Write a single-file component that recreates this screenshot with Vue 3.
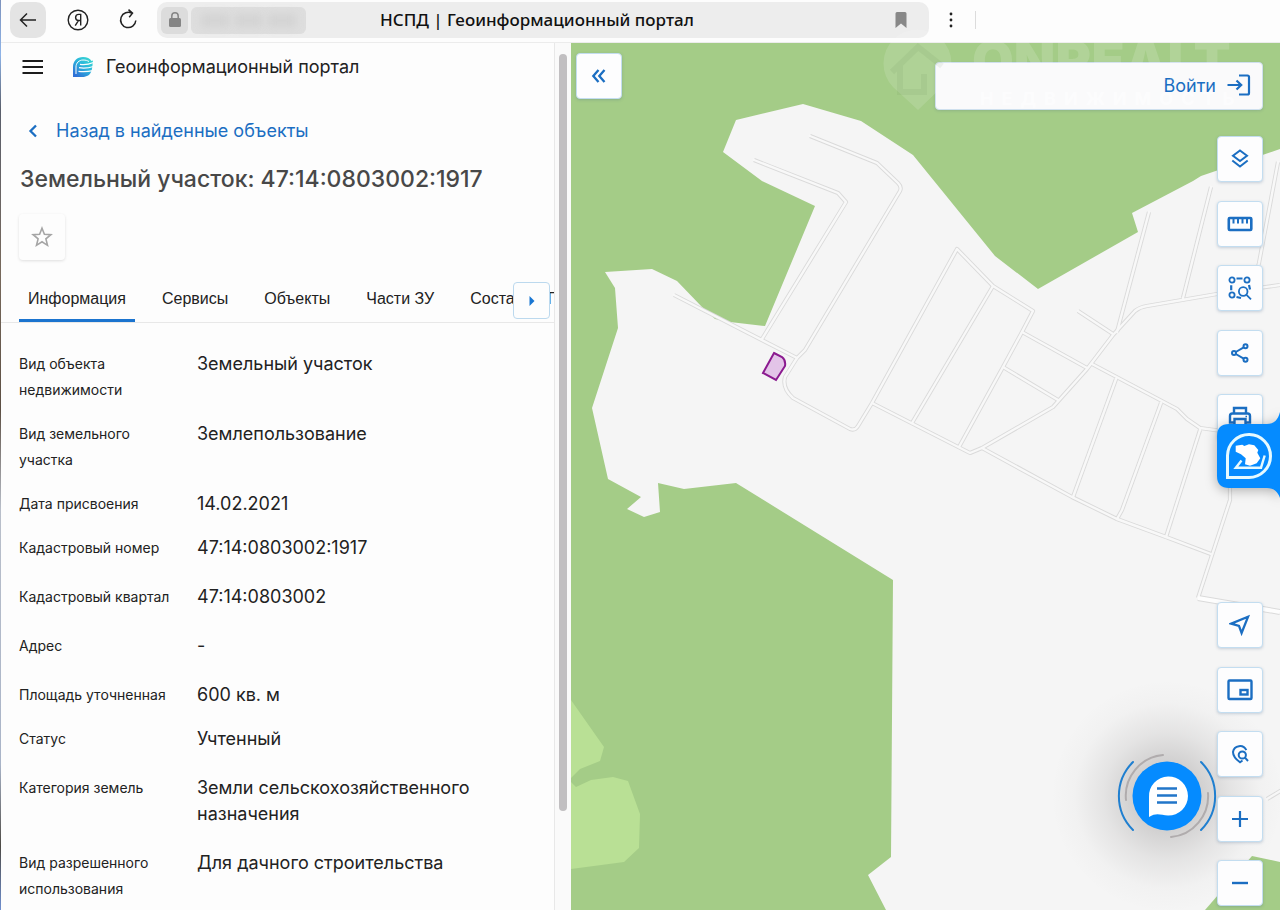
<script setup>
import { ref } from 'vue'

const tabs = ['Информация', 'Сервисы', 'Объекты', 'Части ЗУ', 'Состав ЕЗП']
const activeTab = ref('Информация')

const rows = [
  { label: 'Вид объекта недвижимости', value: 'Земельный участок' },
  { label: 'Вид земельного участка', value: 'Землепользование' },
  { label: 'Дата присвоения', value: '14.02.2021' },
  { label: 'Кадастровый номер', value: '47:14:0803002:1917', spaced: true },
  { label: 'Кадастровый квартал', value: '47:14:0803002', spaced: true },
  { label: 'Адрес', value: '-', spaced: true },
  { label: 'Площадь уточненная', value: '600 кв. м' },
  { label: 'Статус', value: 'Учтенный', spaced: true },
  { label: 'Категория земель', value: 'Земли сельскохозяйственного назначения', spaced: true },
  { label: 'Вид разрешенного использования', value: 'Для дачного строительства' },
]

const roads = [
  'M810 136L877 163L898 183Q902 187 900 191L805 350L797 358L785 377Q782 388 793 398L850 429Q855 431 858 426L872 403L957 249L993 286L1033 311L1022 332L1003 367L959 447',
  'M754 160L838 193L846 202L762 339',
  'M674 295L797 358',
  'M872 403L970 453L982 448L1053 407L1087 369L1113 335L1135 311Q1140 307 1147 306L1217 294L1280 285',
  'M993 286L912 423',
  'M1022 332L1087 368M1092 364L1177 409L1187 419L1200 428L1222 431',
  'M1003 367L1058 400',
  'M1078 311L1113 334',
  'M1149 212L1117 332',
  'M1211 187L1183 298',
  'M1278 162L1259 263L1252 290',
  'M982 448L1072 497L1117 519L1166 537L1211 554',
  'M1116 379L1073 497',
  'M1161 403L1122 510L1117 519',
  'M1200 430L1166 537',
  'M1230 480L1230 500L1198 598',
  'M1267 799L1282 790',
]
</script>

<template>
  <div class="page">
    <header class="toolbar">
      <button class="nav nav-back" aria-label="Назад">
        <svg width="20" height="20" viewBox="0 0 20 20" fill="none" stroke="#222" stroke-width="1.5"><path d="M18 10H3M9 3.5L2.5 10L9 16.5" /></svg>
      </button>
      <button class="nav" aria-label="Яндекс">
        <svg width="24" height="24" viewBox="0 0 24 24" fill="none" stroke="#222" stroke-width="1.4">
          <circle cx="12" cy="12" r="9.8" />
          <path d="M14.7 17.6V6.4h-1.9c-2 0-3.2 1.2-3.2 3.1 0 1.9 1.2 3 3.1 3h2M12.6 12.4L9.2 17.6" />
        </svg>
      </button>
      <button class="nav" aria-label="Обновить">
        <svg width="24" height="24" viewBox="0 0 24 24" fill="none" stroke="#222" stroke-width="1.5"><path d="M19.8 12.5A7.6 7.6 0 1 1 16 5.400M12.500 1.600L16.500 5.200L13.200 9.200" /></svg>
      </button>
      <div class="address">
        <button class="lock" aria-label="Защищённое соединение">
          <svg width="14" height="18" viewBox="0 0 14 18"><rect x="1" y="7" width="12" height="9" rx="1.500" fill="#858585" /><path d="M3.800 8V5a3.200 3.200 0 0 1 6.400 0v3" fill="none" stroke="#858585" stroke-width="1.500" /></svg>
        </button>
        <span class="host"><i></i><i></i><i></i></span>
        <span class="page-title">НСПД | Геоинформационный портал</span>
        <button class="bookmark" aria-label="Закладка">
          <svg width="12" height="18" viewBox="0 0 12 18"><path d="M.5 2.500Q.5 1 2 1h8q1.500 0 1.500 1.500V17L6 12.500L.5 17z" fill="#888" /></svg>
        </button>
      </div>
      <button class="dots" aria-label="Меню">
        <svg width="4" height="18" viewBox="0 0 4 18" fill="#222"><circle cx="2" cy="3" r="1.400" /><circle cx="2" cy="9" r="1.400" /><circle cx="2" cy="15" r="1.400" /></svg>
      </button>
      <span class="divider"></span>
    </header>

    <main class="content">
      <aside class="panel">
        <div class="panel-body">
          <div class="brand">
            <button class="burger" aria-label="Меню портала">
              <svg width="22" height="16" viewBox="0 0 22 16" stroke="#1c1c1c" stroke-width="2.200"><path d="M.5 2H21M.5 8H21M.5 14H21" /></svg>
            </button>
            <svg class="logo" width="22" height="22" viewBox="0 0 22 22">
              <defs><linearGradient id="brandFill" x1="1" y1="0" x2="0.200" y2="1"><stop offset="0" stop-color="#3be0cf" /><stop offset="0.500" stop-color="#2bb5dc" /><stop offset="1" stop-color="#2f6fd6" /></linearGradient></defs>
              <path d="M1 21V11C1 5 5 1 11 1c4 0 7 1.500 8.500 4L21 4.500C20 12 21 21 10 21z" fill="url(#brandFill)" />
              <path d="M4 18v-7c0-4 3-7 7-7 3 0 4 .5 6 1.500" fill="none" stroke="#fdfdfd" stroke-width="1" />
              <path d="M8 8.300c4 .8 8 .4 13.500-1.800M7 11.700c5 .8 9 .5 14.500-1.200M6.500 15.300c5 .6 9 .4 14.500-.6" fill="none" stroke="#fdfdfd" stroke-width="1.300" />
            </svg>
            <span class="brand-name">Геоинформационный портал</span>
          </div>

          <a class="back" href="#">
            <svg width="10" height="14" viewBox="0 0 10 14" fill="none" stroke="#1b6ec2" stroke-width="2.300"><path d="M8 1.500L2.500 7L8 12.500" /></svg>
            Назад в найденные объекты
          </a>

          <h1>Земельный участок: 47:14:0803002:1917</h1>

          <button class="star" aria-label="В избранное">
            <svg width="22" height="22" viewBox="0 0 22 22" fill="none" stroke="#a5a5a5" stroke-width="1.600"><path d="M11 2.200L13.400 8.300L19.900 8.700L14.900 12.900L16.500 19.300L11 15.800L5.500 19.300L7.100 12.900L2.100 8.700L8.600 8.300z" /></svg>
          </button>

          <div class="tabs-wrap">
            <nav class="tabs" role="tablist">
              <button
                v-for="tab in tabs"
                :key="tab"
                role="tab"
                :aria-selected="tab === activeTab"
                :class="['tab', { active: tab === activeTab }]"
                @click="activeTab = tab"
              >{{ tab }}</button>
            </nav>
            <button class="tabs-next" aria-label="Следующие вкладки">
              <svg width="6" height="10" viewBox="0 0 6 10"><path d="M0.500 0L5.500 5L0.500 10z" fill="#1976d2" /></svg>
            </button>
          </div>

          <dl class="facts">
            <div v-for="row in rows" :key="row.label" :class="['fact', { spaced: row.spaced }]">
              <dt>{{ row.label }}</dt>
              <dd>{{ row.value }}</dd>
            </div>
          </dl>
        </div>
        <div class="scrollbar"><div class="thumb"></div></div>
      </aside>

      <section class="map">
        <svg class="canvas" viewBox="571 43 709 867" preserveAspectRatio="xMinYMin slice">
          <rect x="571" y="43" width="709" height="867" fill="#a4cc87" />
          <path fill="#f5f5f5" d="M803 104L861 121L913 155L995 256L1038 289L1138 232L1132 213L1193 181L1201 176L1280 149V910H886L868 875L891 857L893 580L736 483L684 489L658 483L660 512L644 517L627 509L641 497L608 479L592 408L618 328L615 288L605 272L652 269L677 281L702 307L715 319L730 322L765 326L815 206L762 181L723 152L736 120z" />
          <path fill="#b9e095" d="M571 700L604 747L600 761L580 769L571 778zM571 782L576 787L591 780L613 777L628 781L640 814L639 848L624 862L571 869z" />
          <path fill="#a4cc87" d="M1205 910L1252 856L1280 862V910z" />
          <g fill="none" stroke-linejoin="round">
            <path v-for="d in roads" :key="d" :d="d" stroke="#dadada" stroke-width="4.200" />
            <path d="M1198 598L1280 612" stroke="#dadada" stroke-width="6" />
            <path v-for="d in roads" :key="d + 'i'" :d="d" stroke="#f8f8f8" stroke-width="2.400" stroke-linecap="round" />
            <path d="M1198 598L1280 612" stroke="#fdfdfd" stroke-width="4" />
          </g>
          <path d="M774 353L782 357Q786 360 785 366L776 380L763 373z" fill="#e3c4e8" stroke="#8b1a8f" stroke-width="2" />
        </svg>

        <button class="chat" aria-label="Открыть чат">
          <svg width="104" height="104" viewBox="0 0 104 104" fill="none" stroke-linecap="round">
            <g stroke="#1f7fd0" stroke-width="2"><path d="M18 18A48 48 0 0 0 18 86M86 18A48 48 0 0 1 86 86" /></g>
            <g stroke="#b0acad" stroke-width="2"><path d="M48 11A41 41 0 0 0 11 56M93 49A41 41 0 0 1 56 93" /></g>
            <circle cx="52" cy="52" r="34.500" fill="#058bff" />
            <path d="M34 73V53A19.500 19.500 0 1 1 53 71.500C46 71.500 42 68 34 73z" fill="#fff" />
            <path d="M42 44.500H62M42 51.500H62M42 58.500H62" stroke="#2276c9" stroke-width="2.600" stroke-linecap="butt" />
          </svg>
        </button>

        <button class="tile collapse" aria-label="Свернуть панель">
          <svg width="16" height="16" viewBox="0 0 16 16" fill="none" stroke="#1b6ec2" stroke-width="2.300"><path d="M7.500 2L2.300 8L7.500 14M13.500 2L8.300 8L13.500 14" /></svg>
        </button>

        <a class="login" href="#">
          Войти
          <svg width="24" height="22" viewBox="0 0 24 22" fill="none" stroke="#1b6ec2" stroke-width="2.200"><path d="M0.500 11H14M9.500 6.500L14.200 11L9.500 15.500M12 1.500h8.500q1.500 0 1.500 1.500v16q0 1.500-1.500 1.500H12" /></svg>
        </a>

        <div class="tools tools-top">
          <button class="tile" aria-label="Слои">
            <svg width="18" height="20" viewBox="0 0 18 20" fill="none" stroke="#1b6ec2" stroke-width="2"><path d="M9 1.500L16 6.800L9 12.100L2 6.800zM1.300 11.500L9 17.500L16.700 11.500" /></svg>
          </button>
          <button class="tile" aria-label="Измерения">
            <svg width="26" height="16" viewBox="0 0 26 16" fill="none" stroke="#1b6ec2" stroke-width="2.600"><rect x="1.800" y="2" width="22.500" height="12" rx="1" /><path d="M6.500 2v5.500M11 2v5.500M15.500 2v5.500M20 2v5.500" stroke-width="2" /></svg>
          </button>
          <button class="tile" aria-label="Поиск по области">
            <svg width="24" height="24" viewBox="0 0 24 24" fill="none" stroke="#1b6ec2" stroke-width="1.800">
              <circle cx="4" cy="4" r="2.600" /><circle cx="19" cy="4" r="2.600" /><circle cx="4" cy="19" r="2.600" />
              <path d="M8.500 2.500h6M3.200 9.300v5M21 9l1 4.500M8.500 21l4.500 1" stroke-width="2.200" />
              <circle cx="15.200" cy="15.500" r="4.300" /><path d="M18.500 18.800L23 23.300" />
            </svg>
          </button>
          <button class="tile" aria-label="Поделиться">
            <svg width="18" height="20" viewBox="0 0 18 20" fill="none" stroke="#1b6ec2" stroke-width="2"><circle cx="3" cy="10" r="2" /><circle cx="14.500" cy="3.300" r="2" /><circle cx="14.500" cy="16.700" r="2" /><path d="M4.800 9L12.700 4.400M4.800 11L12.700 15.600" /></svg>
          </button>
          <button class="tile" aria-label="Печать">
            <svg width="24" height="22" viewBox="0 0 24 22" fill="none" stroke="#1b6ec2" stroke-width="2.400"><path d="M6 7V2h12v5M6 16.500H2V10q0-2.500 2.500-2.500h15Q22 7.500 22 10v6.500h-4M6.500 13h11v7h-11z" /><path d="M17.500 10.500h1.500" stroke-width="1.500" /></svg>
          </button>
        </div>

        <div class="tools tools-bottom">
          <button class="tile" aria-label="Моё местоположение">
            <svg width="22" height="22" viewBox="0 0 22 22" fill="none" stroke="#1b6ec2" stroke-width="2.300"><path d="M19 2.800L2.200 9.700L10 11.900L12.600 19z" /></svg>
          </button>
          <button class="tile" aria-label="Обзорная карта">
            <svg width="26" height="22" viewBox="0 0 26 22" fill="none" stroke="#1b6ec2" stroke-width="2.400"><rect x="1.500" y="1.500" width="23" height="18.500" rx="1" /><rect x="13.500" y="11" width="7" height="4.500" /></svg>
          </button>
          <button class="tile" aria-label="Поиск по координатам">
            <svg width="18" height="20" viewBox="0 0 18 20" fill="none" stroke="#1b6ec2" stroke-width="2"><path d="M15.300 6.200A7 7 0 0 0 2 8c0 5 4.500 8.500 7 10.300L11.500 16.500" /><circle cx="11.300" cy="11" r="3.600" /><path d="M14 13.700L17 17" /></svg>
          </button>
          <button class="tile" aria-label="Приблизить">
            <svg width="18" height="18" viewBox="0 0 18 18" stroke="#1b6ec2" stroke-width="2.200"><path d="M1 9H17M9 1V17" /></svg>
          </button>
          <button class="tile" aria-label="Отдалить">
            <svg width="18" height="18" viewBox="0 0 18 18" stroke="#1b6ec2" stroke-width="2.400"><path d="M1 9H17" /></svg>
          </button>
        </div>

        <button class="services" aria-label="Сервисы портала">
          <svg width="63" height="88" viewBox="0 0 63 88">
            <path d="M63 0C61 8 57 12 50 12H12Q0 12 0 24V64Q0 76 12 76H50C57 76 61 80 63 86z" fill="#058bff" />
            <path d="M10.500 65.500V43.500A21.500 21.500 0 1 1 32 65.500z" fill="none" stroke="#e6faff" stroke-width="3" />
            <path d="M18.700 33.700L25.300 32.700L27.300 34L32 32.300L37.300 33.300L41.300 38L40.300 40.700L43.300 46.300L39.700 51.300L33 53.700L28 52.300L28.700 46.300L24 42.300L18.700 39.700z" fill="#fff" />
            <path d="M24.500 48.500L18.800 55.700H44L47.700 43.500" fill="none" stroke="#e6faff" stroke-width="2.400" />
          </svg>
        </button>
      </section>
    </main>

    <div class="watermark" aria-hidden="true">
      <svg width="74" height="84" viewBox="0 0 74 84">
        <path d="M36 82L11 59A34 34 0 1 1 60 59z" fill="#fff" fill-opacity="0.130" />
        <path d="M10 44L36 19L60 38M18 38V64H42V46" fill="none" stroke="#507040" stroke-opacity="0.080" stroke-width="6" />
      </svg>
      <div class="wm-text"><span class="wm-name">ONREALT</span><span class="wm-sub">НЕДВИЖИМОСТЬ</span></div>
    </div>
  </div>
</template>

<style>
body {
  background: #fdfdfd;
}
</style>

<style scoped>
* {
  box-sizing: border-box;
}
button {
  border: 0;
  padding: 0;
  background: none;
  font: inherit;
  color: inherit;
  cursor: pointer;
}
svg {
  display: block;
}
.page {
  position: relative;
  display: flex;
  flex-direction: column;
  height: 100vh;
  overflow: hidden;
  background: #fdfdfd;
  font-family: Inter, "Liberation Sans", sans-serif;
  color: #222;
}
.page::before {
  content: "";
  position: absolute;
  z-index: 5;
  inset: 0 auto 0 0;
  width: 1px;
  background: linear-gradient(#7d93bd, #8fb4e8 6%, #5a5f6c 12%, #77695c 30%, #5c4f43 45%, #b9bfca 56%, #a9b4c8 84%, #4d4a45 93%, #6f8fd0);
}

.toolbar {
  display: flex;
  align-items: center;
  flex: none;
  height: 43px;
  padding: 0 0 2px 10px;
  border-bottom: 1px solid #ececec;
}
.nav {
  display: grid;
  place-items: center;
  width: 36px;
  height: 36px;
  margin-right: 14px;
  border-radius: 10px;
}
.nav-back {
  background: #e4e4e4;
}
.address {
  display: flex;
  align-items: center;
  flex: 1;
  gap: 3px;
  height: 36px;
  margin-right: 20px;
  padding: 0 22px 0 4px;
  border-radius: 10px;
  background: #ededed;
}
.nav + .address {
  margin-left: -3px;
}
.lock {
  display: grid;
  place-items: center;
  width: 27px;
  height: 27px;
  border-radius: 6px;
  background: #dcdcdc;
}
.host {
  display: flex;
  align-items: center;
  gap: 6px;
  width: 115px;
  height: 27px;
  padding: 0 10px;
  border-radius: 6px;
  background: #dedede;
}
.host i {
  flex: 1;
  height: 13px;
  background: #d3d3d3;
  filter: blur(4px);
}
.page-title {
  flex: 1;
  margin: 0 20px 0 71px;
  font-family: "Noto Sans", "Open Sans", sans-serif;
  font-size: 17px;
  font-weight: 500;
  line-height: 24px;
  white-space: nowrap;
  color: #111;
}
.dots {
  width: 4px;
  margin-right: 22px;
}
.divider {
  width: 1px;
  height: 18px;
  margin-right: 304px;
  background: #dcdcdc;
}

.content {
  display: flex;
  flex: 1;
  min-height: 0;
}
.panel {
  display: flex;
  flex: none;
  width: 571px;
}
.panel-body {
  flex: 1;
  min-width: 0;
  overflow: hidden;
}
.scrollbar {
  width: 17px;
  padding: 11px 4px 99px;
  border-left: 1px solid #e8e8e8;
  background: #fafafa;
}
.thumb {
  height: 100%;
  border-radius: 4px;
  background: #c1bfc1;
}
.brand {
  display: flex;
  align-items: center;
  height: 47px;
  padding-left: 22px;
}
.logo {
  margin: 0 12px 0 28px;
}
.brand-name {
  font-size: 18px;
  line-height: 26px;
}
.back {
  display: flex;
  align-items: center;
  gap: 18px;
  margin: 28px 0 0 28px;
  font-size: 18px;
  line-height: 26px;
  color: #1b6ec2;
  text-decoration: none;
}
h1 {
  margin: 19px 0 0 20px;
  font-size: 23px;
  font-weight: 500;
  line-height: 32px;
  color: #484848;
}
.star {
  display: grid;
  place-items: center;
  width: 46px;
  height: 46px;
  margin: 19px 0 0 19px;
  border-radius: 4px;
  box-shadow: 0 1px 3px rgba(0, 0, 0, 0.12);
}
.tabs-wrap {
  position: relative;
  margin-top: 16px;
  border-bottom: 1px solid #e8e8e8;
}
.tabs {
  display: flex;
  gap: 18px;
  height: 46px;
  padding-left: 19px;
  overflow: hidden;
  font-family: "Liberation Sans", Arial, sans-serif;
}
.tab {
  flex: none;
  padding: 2px 9px 0;
  border-bottom: 3px solid transparent;
  font-size: 16px;
  line-height: 24px;
  white-space: nowrap;
}
.tab.active {
  border-bottom-color: #1b74cf;
}
.tabs-next {
  position: absolute;
  top: 6px;
  right: 4px;
  display: grid;
  place-items: center;
  width: 37px;
  height: 37px;
  border: 1px solid #bcd9ee;
  border-radius: 4px;
  background: #fdfdfd;
}
.facts {
  display: grid;
  gap: 18px;
  margin: 28px 0 0;
  padding-left: 19px;
}
.fact {
  display: grid;
  grid-template-columns: 154px 300px;
  column-gap: 24px;
  line-height: 26px;
}
.fact.spaced {
  padding-bottom: 5px;
}
dt {
  font-size: 14px;
}
dd {
  margin: 0;
  font-size: 18px;
}

.map {
  position: relative;
  flex: 1;
  min-width: 0;
  overflow: hidden;
}
.canvas {
  position: absolute;
  inset: 0;
  width: 100%;
  height: 100%;
}
.tile {
  display: grid;
  place-items: center;
  width: 46px;
  height: 46px;
  border: 1px solid #c3ddf0;
  border-radius: 4px;
  background: #fdfdfe;
  box-shadow: 0 1px 3px rgba(60, 90, 130, 0.25);
}
.collapse {
  position: absolute;
  top: 10px;
  left: 5px;
}
.login {
  position: absolute;
  top: 19px;
  right: 17px;
  display: flex;
  align-items: center;
  justify-content: flex-end;
  gap: 11px;
  width: 328px;
  height: 48px;
  padding: 0 11px 2px;
  border: 1px solid #cfe0ee;
  border-radius: 4px;
  background: #fafafb;
  box-shadow: 0 1px 3px rgba(60, 90, 130, 0.2);
  font-size: 18px;
  color: #1b6ec2;
  text-decoration: none;
}
.tools {
  position: absolute;
  right: 17px;
  display: flex;
  flex-direction: column;
  justify-content: space-between;
  height: 304px;
}
.tools-top {
  top: 93px;
}
.tools-bottom {
  bottom: 4px;
}
.services {
  position: absolute;
  top: 369px;
  right: 0;
  filter: drop-shadow(0 2px 6px rgba(0, 0, 0, 0.3));
}
.chat {
  position: absolute;
  right: 61px;
  bottom: 62px;
  border-radius: 50%;
}
.chat::before {
  content: "";
  position: absolute;
  inset: -64px;
  border-radius: 50%;
  background: radial-gradient(closest-side, rgba(60, 55, 55, 0.2) 28%, rgba(60, 55, 55, 0.09) 55%, rgba(60, 55, 55, 0.02) 80%, transparent);
}
.chat svg {
  position: relative;
}

.watermark {
  position: absolute;
  top: 28px;
  right: 0;
  display: flex;
  gap: 16px;
  width: 398px;
  pointer-events: none;
}
.wm-text {
  display: flex;
  flex-direction: column;
  color: rgba(255, 255, 255, 0.15);
}
.wm-name {
  padding-top: 8px;
  font-size: 54px;
  font-weight: 900;
  line-height: 50px;
}
.wm-sub {
  padding: 3px 0 0 8px;
  font-size: 18px;
  font-weight: 700;
  line-height: 20px;
  letter-spacing: 8px;
  color: rgba(255, 255, 255, 0.6);
}
</style>
